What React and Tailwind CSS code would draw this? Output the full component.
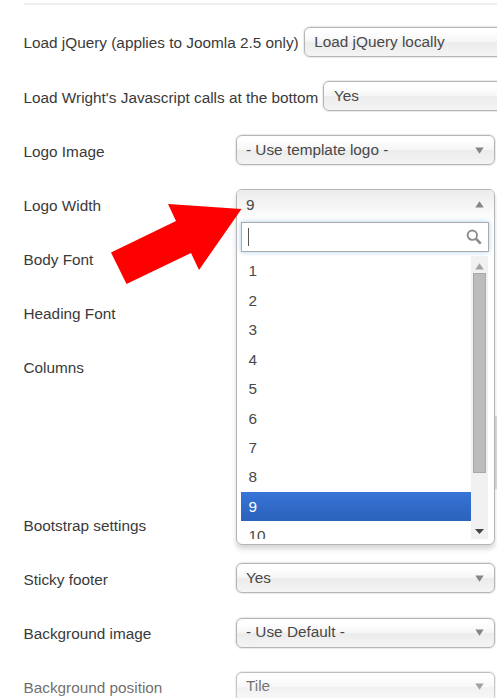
const ROW = 'flex h-[54.14px] shrink-0 items-start';
const LABEL = 'mt-[18.4px] shrink-0 whitespace-nowrap text-[15.33px] leading-[20px] text-[#3a3a3a]';
const SELECT =
  'mt-3 flex h-[30px] shrink-0 items-center justify-between rounded-[6px] border-[1.5px] border-[#b5b5b5] bg-[linear-gradient(to_bottom,#ffffff_15%,#f5f5f5_50%,#ececec_52%,#f4f4f4_100%)] pl-[9.5px] pr-[10px] shadow-[0_0_1px_1px_rgba(0,0,0,0.09)]';

function Triangle({ up = false, color = '#858585' }) {
  return (
    <svg width="9" height="7" viewBox="0 0 9 7" className="shrink-0">
      <path d={up ? 'M0.3 6.5h8.4L4.5 0.3z' : 'M0.3 0.5h8.4L4.5 6.7z'} fill={color} />
    </svg>
  );
}

function Select({ children }) {
  return (
    <div className={`${SELECT} w-[259px]`}>
      <span className="-mt-px text-[15.33px] leading-[20px] text-[#484848]">{children}</span>
      <Triangle />
    </div>
  );
}

function Row({ label, children }) {
  return (
    <div className={ROW}>
      <div className={`${LABEL} w-[212px]`}>{label}</div>
      {children}
    </div>
  );
}

function WideRow({ label, value }) {
  return (
    <div className={ROW}>
      <div className={`${LABEL} mr-[5px]`}>{label}</div>
      <div className={`${SELECT} w-[259px]`}>
        <span className="-mt-px text-[15.33px] leading-[20px] text-[#484848]">{value}</span>
      </div>
    </div>
  );
}

function OpenSelect() {
  return (
    <div className="absolute left-[212px] top-3 flex h-[356px] w-[259px] flex-col rounded-[6px] border-[1.5px] border-[#b5b5b5] bg-white text-[15.33px] text-[#484848] shadow-[0_4px_5px_rgba(0,0,0,0.16)]">
      <div className="flex h-[32px] shrink-0 items-center justify-between rounded-t-[5px] bg-linear-to-b from-[#ececec] to-white pl-[9.5px] pr-[10px]">
        <span className="-mt-[3px] leading-[20px]">9</span>
        <span className="-mt-1"><Triangle up /></span>
      </div>
      <div className="ml-[4.5px] flex h-[29.5px] w-[248px] shrink-0 items-center justify-between border-[1.5px] border-[#aaa] bg-white pl-[6px] pr-[6px] shadow-[0_0_5px_#a9d0f2]">
        <span className="h-[18px] w-px bg-[#555]" />
        <svg width="16" height="16" viewBox="0 0 16 16" fill="none" stroke="#8c8c8c" className="-mt-px">
          <circle cx="6.3" cy="6.2" r="4.7" strokeWidth="1.9" />
          <path d="m9.8 9.6 5 5" strokeWidth="2.7" />
        </svg>
      </div>
      <div className="ml-[4.5px] mt-[4.5px] flex h-[283px] w-[247px] overflow-hidden">
        <div className="w-[230px]">
          {[1, 2, 3, 4, 5, 6, 7, 8, 9, 10].map((n) => (
            <div
              key={n}
              className={
                n === 9
                  ? 'flex h-[29.45px] items-center bg-linear-to-b from-[#3875d7] to-[#2a62bc] pl-[7.5px] pt-[1.5px] text-white'
                  : 'flex h-[29.45px] items-center pl-[7.5px] pt-[1.5px]'
              }
            >
              {n}
            </div>
          ))}
        </div>
        <div className="flex w-[17px] flex-col items-center bg-[#f1f1f1]">
          <div className="flex h-[17px] items-center pt-[3px]"><Triangle up color="#a3a3a3" /></div>
          <div className="h-[200px] w-[13px] border border-[#a8a8a8] bg-[#bcbcbc]" />
          <div className="mt-auto pb-[5px]">
            <svg width="9" height="5" viewBox="0 0 9 5" className="block"><path d="M0 0h9L4.5 5z" fill="#444" /></svg>
          </div>
        </div>
      </div>
    </div>
  );
}

export default function App() {
  return (
    <div className="relative h-[698px] w-[497px] overflow-hidden bg-white font-['Liberation_Sans',Arial,sans-serif]">
      <div className="ml-6 mt-[3px] h-[2px] bg-[#efefef]" />
      <div className="flex flex-col pl-[23.5px] pt-[10px]">
        <WideRow label="Load jQuery (applies to Joomla 2.5 only)" value="Load jQuery locally" />
        <WideRow label="Load Wright's Javascript calls at the bottom" value="Yes" />
        <Row label="Logo Image"><Select>- Use template logo -</Select></Row>
        <div className="relative z-10">
          <Row label="Logo Width" />
          <OpenSelect />
        </div>
        <Row label="Body Font" />
        <Row label="Heading Font" />
        <div className="flex h-[157.6px] shrink-0 items-start justify-between">
          <div className={LABEL}>Columns</div>
          <div className="mt-[76px] h-[73px] w-[3px] bg-[#dedede]" />
        </div>
        <Row label="Bootstrap settings" />
        <Row label="Sticky footer"><Select>Yes</Select></Row>
        <Row label="Background image"><Select>- Use Default -</Select></Row>
        <Row label="Background position"><Select>Tile</Select></Row>
      </div>
      <div className="absolute inset-x-0 bottom-0 h-[40px] bg-linear-to-b from-white/0 to-white/35" />
      <svg className="absolute left-0 top-0 z-20" width="497" height="698" viewBox="0 0 497 698">
        <path d="M241.5 209 168 204l8 17-65 31.5 15.5 31.5 64.5-31 8 17z" fill="#f00" />
      </svg>
    </div>
  );
}
